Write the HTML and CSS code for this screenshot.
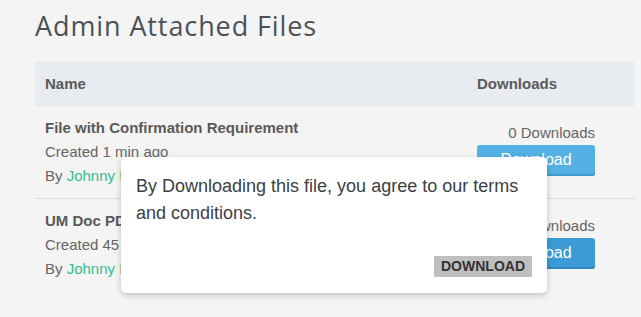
FILE: index.html
```html
<!DOCTYPE html>
<html>
<head>
<meta charset="utf-8">
<link rel="stylesheet" href="styles.css">
</head>
<body>
<div class="page">
  <h1 class="title">Admin Attached Files</h1>
  <div class="files">
    <div class="row head">
      <div class="cell name-col">Name</div>
      <div class="cell dl-col">Downloads</div>
    </div>
    <div class="row item">
      <div class="cell name-col">
        <div class="file-name">File with Confirmation Requirement</div>
        <div class="meta">Created 1 min ago</div>
        <div class="meta">By <a class="author" href="#">Johnny Lee</a></div>
      </div>
      <div class="cell dl-col">
        <div class="count">0 Downloads</div>
        <button class="btn">Download</button>
      </div>
    </div>
    <div class="row item">
      <div class="cell name-col">
        <div class="file-name">UM Doc PDF</div>
        <div class="meta">Created 45 mins ago</div>
        <div class="meta">By <a class="author" href="#">Johnny Lee</a></div>
      </div>
      <div class="cell dl-col">
        <div class="count">2 Downloads</div>
        <button class="btn btn-dark">Download</button>
      </div>
    </div>
  </div>
  <div class="modal">
    <p class="modal-text">By Downloading this file, you agree to our terms and conditions.</p>
    <div class="modal-actions">
      <button class="modal-btn">DOWNLOAD</button>
    </div>
  </div>
</div>
</body>
</html>
```

FILE: styles.css
```css
html, body {
  margin: 0;
  padding: 0;
  background: #f4f4f4;
}
.page {
  position: relative;
  box-sizing: border-box;
  min-height: 317px;
  padding: 10px 6px 24px 35px;
  font-family: "Liberation Sans", Arial, sans-serif;
}
.title {
  margin: 0 0 20px;
  font-family: "Open Sans", sans-serif;
  font-weight: 500;
  font-size: 27px;
  line-height: 32px;
  letter-spacing: 0.9px;
  color: #4a5258;
}
.files {
  width: 600px;
}
.row {
  display: grid;
  grid-template-columns: 1fr 168px;
}
.head {
  background: #e8ebef;
  height: 44px;
  line-height: 43px;
  font-size: 15px;
  font-weight: 700;
  color: #5a5a5a;
}
.head .name-col {
  padding-left: 10px;
}
.head .dl-col {
  padding-left: 10px;
}
.item {
  border-bottom: 1px solid #d9dfe5;
  font-size: 15px;
  line-height: 24px;
  color: #666;
}
.item:last-child {
  border-bottom: 0;
}
.item .name-col {
  padding: 10px;
}
.item .dl-col {
  padding: 15px 40px 0 10px;
  text-align: right;
}
.file-name {
  font-weight: 700;
  color: #5a5a5a;
}
.author {
  color: #36bd8a;
  text-decoration: none;
}
.btn {
  display: block;
  width: 118px;
  height: 31px;
  margin: 0;
  padding: 0 0 2px;
  border: 0;
  border-radius: 3px;
  background: #55b1e3;
  box-shadow: inset 0 -2px 0 #3f98cc;
  color: #fff;
  font-family: "Liberation Sans", Arial, sans-serif;
  font-size: 16px;
  line-height: 29px;
  text-align: center;
}
.btn-dark {
  background: #3a9bd5;
  box-shadow: inset 0 -2px 0 #2f88bf;
}
.modal {
  position: absolute;
  left: 121px;
  top: 157px;
  width: 396px;
  padding: 16px 15px 16px 15px;
  background: #fff;
  border-radius: 5px;
  box-shadow: 0 2px 6px rgba(0, 0, 0, 0.22);
}
.modal-text {
  margin: 0;
  font-size: 18px;
  line-height: 27px;
  color: #3b4046;
}
.modal-actions {
  display: flex;
  justify-content: flex-end;
  margin-top: 29px;
}
.modal-btn {
  margin: 0;
  padding: 0 7px;
  height: 21px;
  border: 0;
  border-radius: 0;
  background: #bfbfbf;
  color: #333;
  font-family: "Liberation Sans", Arial, sans-serif;
  font-weight: 700;
  font-size: 14px;
  line-height: 21px;
}
```
